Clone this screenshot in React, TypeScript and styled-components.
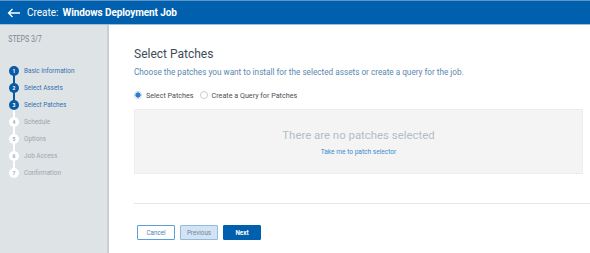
import * as React from 'react';
import styled, { createGlobalStyle } from 'styled-components';

const GlobalStyle = createGlobalStyle`
  html, body {
    margin: 0;
    padding: 0;
    background: #ffffff;
    font-family: Roboto, 'Liberation Sans', sans-serif;
  }
`;

const Page = styled.div`
  display: flex;
  flex-direction: column;
  width: 590px;
  height: 253px;
  overflow: hidden;
`;

const Header = styled.header`
  display: flex;
  align-items: center;
  height: 23px;
  padding-left: 7px;
  background: #0060ad;
  border-top: 1px solid #5f95cb;
  border-bottom: 1px solid #9cc0e2;
  color: #ffffff;
  font-size: 10px;
`;

const BackArrow = styled.svg`
  width: 14px;
  height: 10px;
  margin-right: 6px;
`;

const HeaderLabel = styled.span`
  margin-right: 4px;
`;

const HeaderTitle = styled.span`
  font-weight: 700;
  letter-spacing: -0.1px;
`;

const Body = styled.div`
  display: flex;
  flex: 1;
  min-height: 0;
`;

const Sidebar = styled.aside`
  width: 107px;
  flex-shrink: 0;
  background: #dee3e6;
  border-right: 2px solid #c9cfd4;
  padding-top: 10px;
`;

const StepsLabel = styled.div`
  padding-left: 10px;
  height: 9px;
  line-height: 9px;
  font-family: 'Liberation Sans Narrow', 'Roboto', sans-serif;
  font-size: 8.6px;
  color: #7b8791;
  transform: scaleX(0.82);
  transform-origin: left center;
`;

const StepList = styled.ol`
  list-style: none;
  margin: 18px 0 0;
  padding: 0;
`;

const StepItem = styled.li<{ $done: boolean; $lineDone: boolean; $last: boolean }>`
  position: relative;
  display: flex;
  align-items: center;
  height: 17px;
  padding-left: 9px;
  font-size: 6.4px;
  color: ${(p) => (p.$done ? '#3670b0' : '#9ea5ab')};

  &::after {
    content: '';
    display: ${(p) => (p.$last ? 'none' : 'block')};
    position: absolute;
    left: 13px;
    top: 8px;
    width: 2px;
    height: 17px;
    background: ${(p) => (p.$lineDone ? '#0b5aa5' : '#ffffff')};
  }
`;

const StepDot = styled.span<{ $done: boolean }>`
  position: relative;
  z-index: 1;
  display: flex;
  align-items: center;
  justify-content: center;
  width: 10px;
  height: 10px;
  border-radius: 50%;
  background: ${(p) => (p.$done ? '#0b5aa5' : '#ffffff')};
  color: ${(p) => (p.$done ? '#ffffff' : '#a4a9ae')};
  font-size: 5px;
  font-weight: 700;
  margin-right: 5px;
`;

const Main = styled.main`
  flex: 1;
  display: flex;
  flex-direction: column;
  padding-top: 22px;
`;

const Content = styled.div`
  padding: 0 7px 0 25px;
`;

const Title = styled.h1`
  margin: 0;
  font-size: 12px;
  line-height: 14px;
  font-weight: 400;
  color: #3e4b58;
`;

const Subtitle = styled.p`
  margin: 6px 0 0;
  font-size: 8.2px;
  line-height: 10px;
  color: #5a87b1;
`;

const RadioRow = styled.div`
  display: flex;
  align-items: center;
  height: 10px;
  margin-top: 13px;
  font-size: 7.2px;
  color: #4a4f55;
`;

const RadioOption = styled.label`
  display: flex;
  align-items: center;
  margin-right: 6px;
`;

const RadioCircle = styled.span<{ $checked: boolean }>`
  display: inline-block;
  box-sizing: border-box;
  width: 8px;
  height: 8px;
  border-radius: 50%;
  margin-right: 4px;
  border: 1px solid ${(p) => (p.$checked ? '#c3d3e2' : '#c9cdd1')};
  background: ${(p) => (p.$checked ? 'radial-gradient(circle, #2b7fcf 0 2.4px, #ffffff 2.9px)' : '#ffffff')};
`;

const EmptyPanel = styled.div`
  display: flex;
  flex-direction: column;
  align-items: center;
  height: 65px;
  box-sizing: border-box;
  margin-top: 9px;
  padding-top: 18px;
  background: #f4f4f4;
  border: 1px dotted #e6e6e6;
`;

const EmptyText = styled.div`
  font-size: 11.4px;
  line-height: 14px;
  color: #b2bec8;
`;

const PanelLink = styled.a`
  margin-top: 6px;
  font-size: 6.6px;
  line-height: 9px;
  color: #3a8ccf;
  text-decoration: none;
  cursor: pointer;
`;

const Footer = styled.div`
  display: flex;
  gap: 5px;
  margin: 29px 0 0 25px;
  padding: 21px 0 0 3px;
  border-top: 1px solid #e4e7ea;
`;

const Button = styled.button<{ $variant: 'outline' | 'soft' | 'primary' }>`
  box-sizing: border-box;
  width: 38px;
  height: 15px;
  padding: 0;
  font-family: Roboto, 'Liberation Sans', sans-serif;
  font-size: 6.3px;
  font-weight: ${(p) => (p.$variant === 'primary' ? 700 : 400)};
  border-radius: 1px;
  border: 1px solid
    ${(p) => (p.$variant === 'outline' ? '#5c9fd6' : p.$variant === 'soft' ? '#93bbe0' : '#0060ad')};
  background: ${(p) => (p.$variant === 'outline' ? '#ffffff' : p.$variant === 'soft' ? '#d3e3f2' : '#0060ad')};
  color: ${(p) => (p.$variant === 'outline' ? '#4a7fb3' : p.$variant === 'soft' ? '#6c87a3' : '#ffffff')};
`;

const steps = [
  'Basic Information',
  'Select Assets',
  'Select Patches',
  'Schedule',
  'Options',
  'Job Access',
  'Confirmation',
];
const current = 3;

export default function App() {
  return (
    <>
      <GlobalStyle />
      <Page>
        <Header>
          <BackArrow viewBox="0 0 14 10">
            <path d="M13 5H1.5M5.5 1L1.5 5l4 4" fill="none" stroke="#ffffff" strokeWidth="1.3" />
          </BackArrow>
          <HeaderLabel>Create:</HeaderLabel>
          <HeaderTitle>Windows Deployment Job</HeaderTitle>
        </Header>
        <Body>
          <Sidebar>
            <StepsLabel>STEPS 3/7</StepsLabel>
            <StepList>
              {steps.map((step, i) => (
                <StepItem
                  key={step}
                  $done={i < current}
                  $lineDone={i + 1 < current}
                  $last={i === steps.length - 1}
                >
                  <StepDot $done={i < current}>{i + 1}</StepDot>
                  {step}
                </StepItem>
              ))}
            </StepList>
          </Sidebar>
          <Main>
            <Content>
              <Title>Select Patches</Title>
              <Subtitle>
                Choose the patches you want to install for the selected assets or create a query for the job.
              </Subtitle>
              <RadioRow>
                <RadioOption>
                  <RadioCircle $checked />
                  Select Patches
                </RadioOption>
                <RadioOption>
                  <RadioCircle $checked={false} />
                  Create a Query for Patches
                </RadioOption>
              </RadioRow>
              <EmptyPanel>
                <EmptyText>There are no patches selected</EmptyText>
                <PanelLink>Take me to patch selector</PanelLink>
              </EmptyPanel>
            </Content>
            <Footer>
              <Button $variant="outline">Cancel</Button>
              <Button $variant="soft">Previous</Button>
              <Button $variant="primary">Next</Button>
            </Footer>
          </Main>
        </Body>
      </Page>
    </>
  );
}
